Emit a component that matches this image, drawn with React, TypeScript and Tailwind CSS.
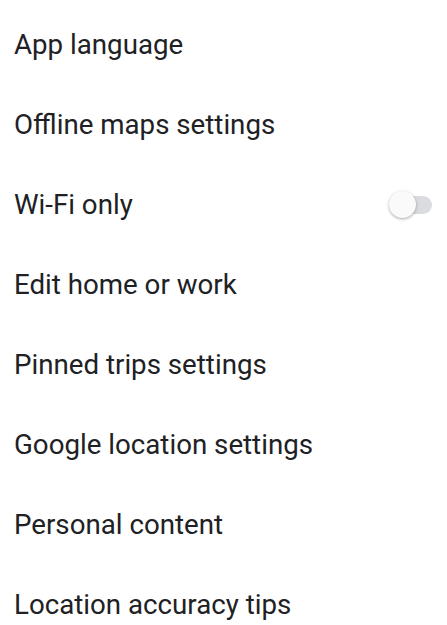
import React from "react";

const items = [
  "App language",
  "Offline maps settings",
  "Wi-Fi only",
  "Edit home or work",
  "Pinned trips settings",
  "Google location settings",
  "Personal content",
  "Location accuracy tips",
];

export default function App() {
  return (
    <div className="w-[447px] h-[625px] bg-white overflow-hidden" style={{ fontFamily: "Roboto, sans-serif" }}>
      <div className="flex flex-col pt-[5px]">
        {items.map((t) => (
          <div key={t} className="h-[80px] flex items-center justify-between pl-[14px] pr-[15px]">
            <span className="text-[27.7px] text-[#202124] leading-none">{t}</span>
            {t === "Wi-Fi only" && (
              <div className="relative w-[42px] h-[28px] flex items-center">
                <div className="ml-[6px] w-[37px] h-[18px] rounded-full bg-[#dadce0]" />
                <div className="absolute left-[-1px] top-[0px] w-[27px] h-[27px] rounded-full bg-[#fafafa] shadow-[0_1px_3px_rgba(0,0,0,0.35)]" />
              </div>
            )}
          </div>
        ))}
      </div>
    </div>
  );
}
